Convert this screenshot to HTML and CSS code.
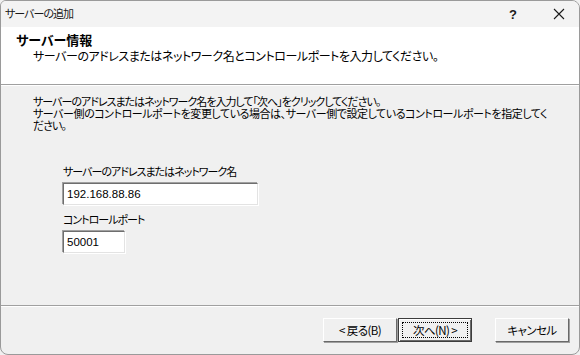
FILE: index.html
```html
<!DOCTYPE html>
<html lang="ja">
<head>
  <meta charset="UTF-8">
  <title>サーバーの追加</title>
  <link rel="stylesheet" href="styles.css">
</head>
<body>
  <div class="window">
    <div class="titlebar">
      <span class="title">サーバーの追加</span>
      <span class="tb-help">?</span>
      <span class="tb-close">
        <svg width="12" height="12" viewBox="0 0 12 12"><path d="M1 1L11 11M11 1L1 11" stroke="#1a1a1a" stroke-width="1.1" fill="none"/></svg>
      </span>
    </div>

    <div class="header">
      <div class="header-title">サーバー情報</div>
      <div class="header-sub">サーバーのアドレスまたはネットワーク名とコントロールポートを入力してください。</div>
    </div>
    <div class="rule"></div>

    <div class="content">
      <p class="desc">サーバーのアドレスまたはネットワーク名を入力して「次へ」をクリックしてください。<br><span class="desc-wide">サーバー側のコントロールポートを変更している場合は、サーバー側で設定しているコントロールポートを指定してく</span><br>ださい。</p>

      <div class="fields">
        <label class="field-label">サーバーのアドレスまたはネットワーク名</label>
        <div class="input input-wide">192.168.88.86</div>
        <label class="field-label">コントロールポート</label>
        <div class="input input-short">50001</div>
      </div>
    </div>
    <div class="rule"></div>

    <div class="footer">
      <button class="btn">&lt;&nbsp;戻る(B)</button>
      <button class="btn btn-default"><span class="focus">次へ(N)&nbsp;&gt;</span></button>
      <button class="btn btn-cancel">キャンセル</button>
    </div>
  </div>
</body>
</html>
```

FILE: styles.css
```css
* {
  margin: 0;
  padding: 0;
  box-sizing: border-box;
}

body {
  width: 580px;
  height: 355px;
  background: #f0f0f0;
  font-family: "Noto Sans CJK JP", "Noto Sans", sans-serif;
  font-size: 12px;
  font-feature-settings: "palt";
  color: #000;
  overflow: hidden;
}

.window {
  width: 580px;
  height: 355px;
  display: flex;
  flex-direction: column;
  border: 1px solid #9a9a9a;
  border-radius: 6px 8px 8px 8px;
  overflow: hidden;
  background: #f0f0f0;
}

.titlebar {
  height: 26px;
  flex: none;
  display: flex;
  align-items: center;
  background: #f3f3f3;
  padding-left: 4px;
}

.title {
  flex: 1;
  font-size: 11px;
  letter-spacing: -1px;
  line-height: 14px;
  margin-top: -2px;
  color: #1a1a1a;
}

.tb-help {
  width: 20px;
  font-family: "Liberation Sans", sans-serif;
  font-size: 13px;
  font-weight: bold;
  color: #1a1a1a;
  text-align: center;
  margin-right: 26px;
}

.tb-close {
  width: 20px;
  display: flex;
  justify-content: center;
  margin-right: 10px;
}

.header {
  height: 57px;
  flex: none;
  background: #fff;
  padding: 5px 0 0 15px;
}

.header-title {
  font-size: 13px;
  font-weight: bold;
  line-height: 16px;
}

.header-sub {
  padding-left: 17px;
  margin-top: 1px;
  line-height: 14px;
  letter-spacing: -0.45px;
}

.rule {
  height: 2px;
  flex: none;
  border-top: 1px solid #a0a0a0;
  border-bottom: 1px solid #fff;
}

.content {
  flex: 1;
  padding: 9px 0 0 32px;
}

.desc {
  font-size: 11px;
  letter-spacing: -1px;
  line-height: 12px;
  white-space: nowrap;
}

.desc-wide {
  letter-spacing: -0.45px;
}

.fields {
  display: flex;
  flex-direction: column;
  align-items: flex-start;
  margin: 34px 0 0 30px;
}

.field-label {
  font-size: 11px;
  letter-spacing: -1px;
  line-height: 13px;
}

.input {
  height: 22px;
  margin: 5px 0 8px;
  padding: 3px 3px 0;
  background: #fff;
  border: 1px solid;
  border-color: #6e6e6e #e3e3e3 #e3e3e3 #6e6e6e;
  box-shadow: -1px -1px 0 #a0a0a0, 1px 1px 0 #fff;
  font-family: "Liberation Sans", sans-serif;
  font-size: 11.5px;
  line-height: 14px;
}

.input-wide {
  width: 195px;
}

.input-short {
  width: 62px;
}

.footer {
  height: 47px;
  flex: none;
  display: flex;
  justify-content: flex-end;
  align-items: flex-start;
  padding: 11px 10px 0 0;
  gap: 1px;
}

.btn {
  width: 74px;
  height: 24px;
  background: #f0f0f0;
  border: 1px solid;
  border-color: #fff #696969 #696969 #fff;
  box-shadow: 1px 1px 0 #a0a0a0;
  font-family: "Noto Sans CJK JP", "Noto Sans", sans-serif;
  font-feature-settings: "palt";
  font-size: 11.5px;
  letter-spacing: -0.6px;
  color: #000;
  display: flex;
  align-items: center;
  justify-content: center;
}

.btn-default {
  border: 1px solid #3c3c3c;
  box-shadow: inset 1px 1px 0 #fff, inset -1px -1px 0 #696969;
  padding: 3px;
}

.focus {
  flex: 1;
  align-self: stretch;
  display: flex;
  align-items: center;
  justify-content: center;
  border: 1px dotted #000;
}

.btn-cancel {
  margin-left: 22px;
}
```
